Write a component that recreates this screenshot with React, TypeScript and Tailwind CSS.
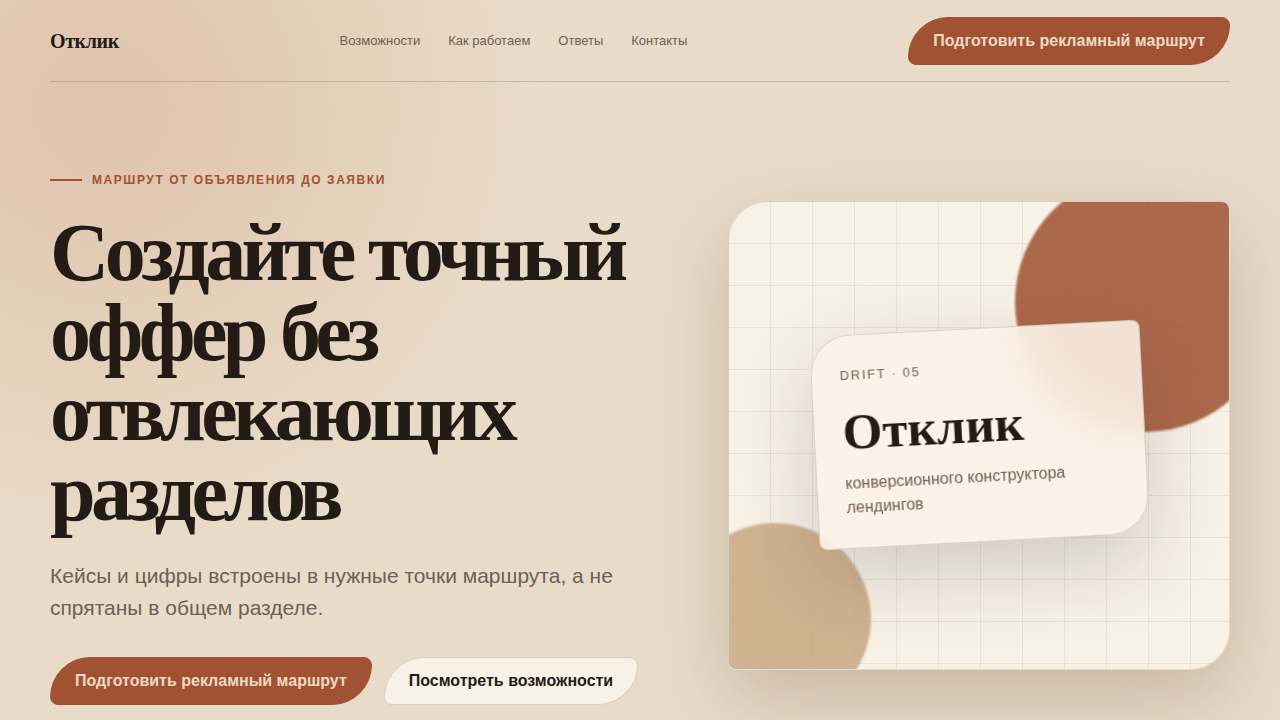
import type { ReactNode } from "react";

const navLinks = [
  { label: "Возможности", href: "#features" },
  { label: "Как работаем", href: "#process" },
  { label: "Ответы", href: "#faq" },
  { label: "Контакты", href: "#contacts" },
];

function PrimaryButton({ children }: { children: ReactNode }) {
  return (
    <button
      type="button"
      className="h-12 shrink-0 rounded-[40px_8px] border border-[#a05232] bg-[#a05232] px-6 text-base font-bold whitespace-nowrap text-[#f1dac4]"
    >
      {children}
    </button>
  );
}

function Header() {
  return (
    <header className="flex h-[82px] items-center justify-between border-b border-[#231c16]/18">
      <a
        href="#top"
        className="font-['Liberation_Serif',serif] text-xl font-bold tracking-[-0.02em]"
      >
        Отклик
      </a>
      <nav className="flex gap-7 text-[13px] text-[#6f5f52]">
        {navLinks.map((link) => (
          <a key={link.href} href={link.href}>
            {link.label}
          </a>
        ))}
      </nav>
      <PrimaryButton>Подготовить рекламный маршрут</PrimaryButton>
    </header>
  );
}

function HeroVisual() {
  return (
    <div className="relative flex h-[469px] items-center justify-center overflow-hidden rounded-[40px_8px] border border-[#231c16]/10 bg-[#f8f1e6] bg-[linear-gradient(90deg,transparent_41px,rgba(35,28,22,0.07)_41px),linear-gradient(transparent_41px,rgba(35,28,22,0.07)_41px)] bg-size-[42px_42px] bg-origin-padding">
      <div className="absolute -top-[30px] -right-[46px] size-[260px] rounded-full bg-[#a05232] opacity-86 blur-[1px]" />
      <div className="absolute -bottom-[46px] -left-[50px] size-[192px] rounded-full bg-[#c8a882] opacity-85 blur-[1px]" />
      <div className="relative w-[331px] -rotate-3 rounded-[40px_8px] border border-[#231c16]/15 bg-[#faf3e7]/88 p-7 shadow-[0_28px_80px_rgba(35,28,22,0.18)] backdrop-blur-[20px]">
        <p className="text-[13px] leading-6 tracking-[0.13em] text-[#6f5f52]">DRIFT · 05</p>
        <h2 className="mt-4 mb-3 font-['Liberation_Serif',serif] text-[51px] leading-[56px] font-bold">
          Отклик
        </h2>
        <p className="text-base leading-6 text-[#6f5f52]">
          конверсионного конструктора лендингов
        </p>
      </div>
    </div>
  );
}

export default function App() {
  return (
    <div
      id="top"
      className="min-h-screen overflow-hidden bg-[#e8dcc8] bg-[radial-gradient(circle_at_8%_15%,rgba(200,130,100,0.28),transparent_34%)] px-[50px] font-['Liberation_Sans',sans-serif] text-[#231c16]"
    >
      <Header />
      <main className="grid grid-cols-[606fr_502fr] items-center gap-[72px] pt-[83px] pb-[15px]">
        <section>
          <p className="flex items-center gap-2.5 text-xs leading-[30px] font-bold tracking-[0.13em] text-[#a05232] uppercase before:h-0.5 before:w-8 before:bg-[#a05232]">
            Маршрут от объявления до заявки
          </p>
          <h1 className="mt-[18px] font-['Liberation_Serif',serif] text-[82px] leading-[80px] font-bold tracking-[-0.055em]">
            Создайте точный оффер без отвлекающих разделов
          </h1>
          <p className="mt-[27px] text-[21px] leading-8 text-[#6f5f52]">
            Кейсы и цифры встроены в нужные точки маршрута, а не спрятаны в общем разделе.
          </p>
          <div className="mt-[33px] flex gap-3">
            <PrimaryButton>Подготовить рекламный маршрут</PrimaryButton>
            <button
              type="button"
              className="h-12 rounded-[40px_8px] border border-[#231c16]/15 bg-[#f8f1e6] px-6 text-base font-bold whitespace-nowrap"
            >
              Посмотреть возможности
            </button>
          </div>
        </section>
        <div className="rounded-[40px_8px] shadow-[0_28px_80px_rgba(80,50,30,0.22)]">
          <HeroVisual />
        </div>
      </main>
    </div>
  );
}
